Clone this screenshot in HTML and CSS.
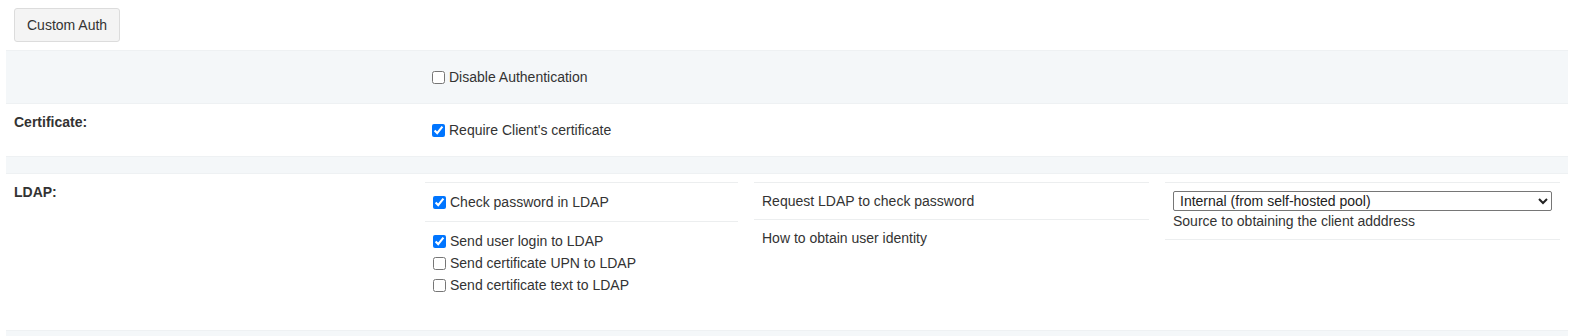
FILE: index.html
```html
<!DOCTYPE html>
<html lang="en">
<head>
    <meta charset="UTF-8">
    <meta name="viewport" content="width=device-width, initial-scale=1.0">
    <title>Custom Auth</title>
    <link rel="stylesheet" href="styles.css">
</head>
<body>
    <div class="page">
        <button class="btn">Custom Auth</button>

        <div class="settings">
            <div class="row striped">
                <div class="label"></div>
                <div class="value">
                    <label class="check check-top"><input type="checkbox"> Disable Authentication</label>
                </div>
            </div>

            <div class="row">
                <div class="label">Certificate:</div>
                <div class="value">
                    <label class="check check-top"><input type="checkbox" checked> Require Client's certificate</label>
                </div>
            </div>

            <div class="row striped empty">
                <div class="label"></div>
                <div class="value"></div>
            </div>

            <div class="row">
                <div class="label">LDAP:</div>
                <div class="value nested">
                    <div class="subtables">
                        <div class="subtable">
                            <div class="cell cell-tall">
                                <label class="check"><input type="checkbox" checked> Check password in LDAP</label>
                            </div>
                            <div class="cell cell-list">
                                <label class="check"><input type="checkbox" checked> Send user login to LDAP</label>
                                <label class="check"><input type="checkbox"> Send certificate UPN to LDAP</label>
                                <label class="check"><input type="checkbox"> Send certificate text to LDAP</label>
                            </div>
                        </div>

                        <div class="subtable">
                            <div class="cell">Request LDAP to check password</div>
                            <div class="cell">How to obtain user identity</div>
                        </div>

                        <div class="subtable">
                            <div class="cell cell-closed">
                                <select class="source">
                                    <option>Internal (from self-hosted pool)</option>
                                    <option>External</option>
                                </select>
                                <div class="hint">Source to obtaining the client adddress</div>
                            </div>
                        </div>
                    </div>
                </div>
            </div>

            <div class="row striped empty">
                <div class="label"></div>
                <div class="value"></div>
            </div>
        </div>
    </div>
</body>
</html>
```

FILE: styles.css
```css
body {
    margin: 0;
    font-family: "Liberation Sans", Arial, sans-serif;
    font-size: 14px;
    line-height: 20px;
    color: #333;
    background: #fff;
}
.page {
    padding: 8px 5px 0 6px;
}
.btn {
    display: block;
    margin: 0 0 8px 8px;
    padding: 6px 12px;
    font-family: inherit;
    font-size: 14px;
    line-height: 20px;
    color: #333;
    background: #f4f4f4;
    border: 1px solid #dcdcdc;
    border-radius: 3px;
    cursor: pointer;
}
.row {
    display: grid;
    grid-template-columns: 411px 1fr;
    border-top: 1px solid #eef1f3;
}
.striped {
    background: #f4f7f9;
}
.label {
    padding: 8px;
    font-weight: bold;
}
.value {
    padding: 16px 8px;
}
.empty .value {
    padding: 8px;
}
.empty .label {
    padding: 0;
}
.value.nested {
    padding: 8px;
}
.check {
    display: flex;
    align-items: center;
    line-height: 20px;
}
.check input {
    width: 13px;
    height: 13px;
    margin: 0 4px 0 0;
    accent-color: #0075ff;
}
.check-top input {
    margin-left: 7px;
}
.subtables {
    display: grid;
    grid-template-columns: 313px 395px 395px;
    column-gap: 16px;
    align-items: start;
}
.subtable {
    margin-bottom: 18px;
}
.cell {
    border-top: 1px solid #eceeef;
    padding: 8px;
}
.cell-tall .check,
.cell-list .check {
    line-height: 22px;
}
.cell-closed {
    border-bottom: 1px solid #eceeef;
}
.source {
    display: block;
    width: 100%;
    height: 20px;
    padding: 0 2px;
    font-family: inherit;
    font-size: 14px;
    color: #222;
    background: #fff;
    border: 1px solid #767676;
    border-radius: 2px;
}
```
